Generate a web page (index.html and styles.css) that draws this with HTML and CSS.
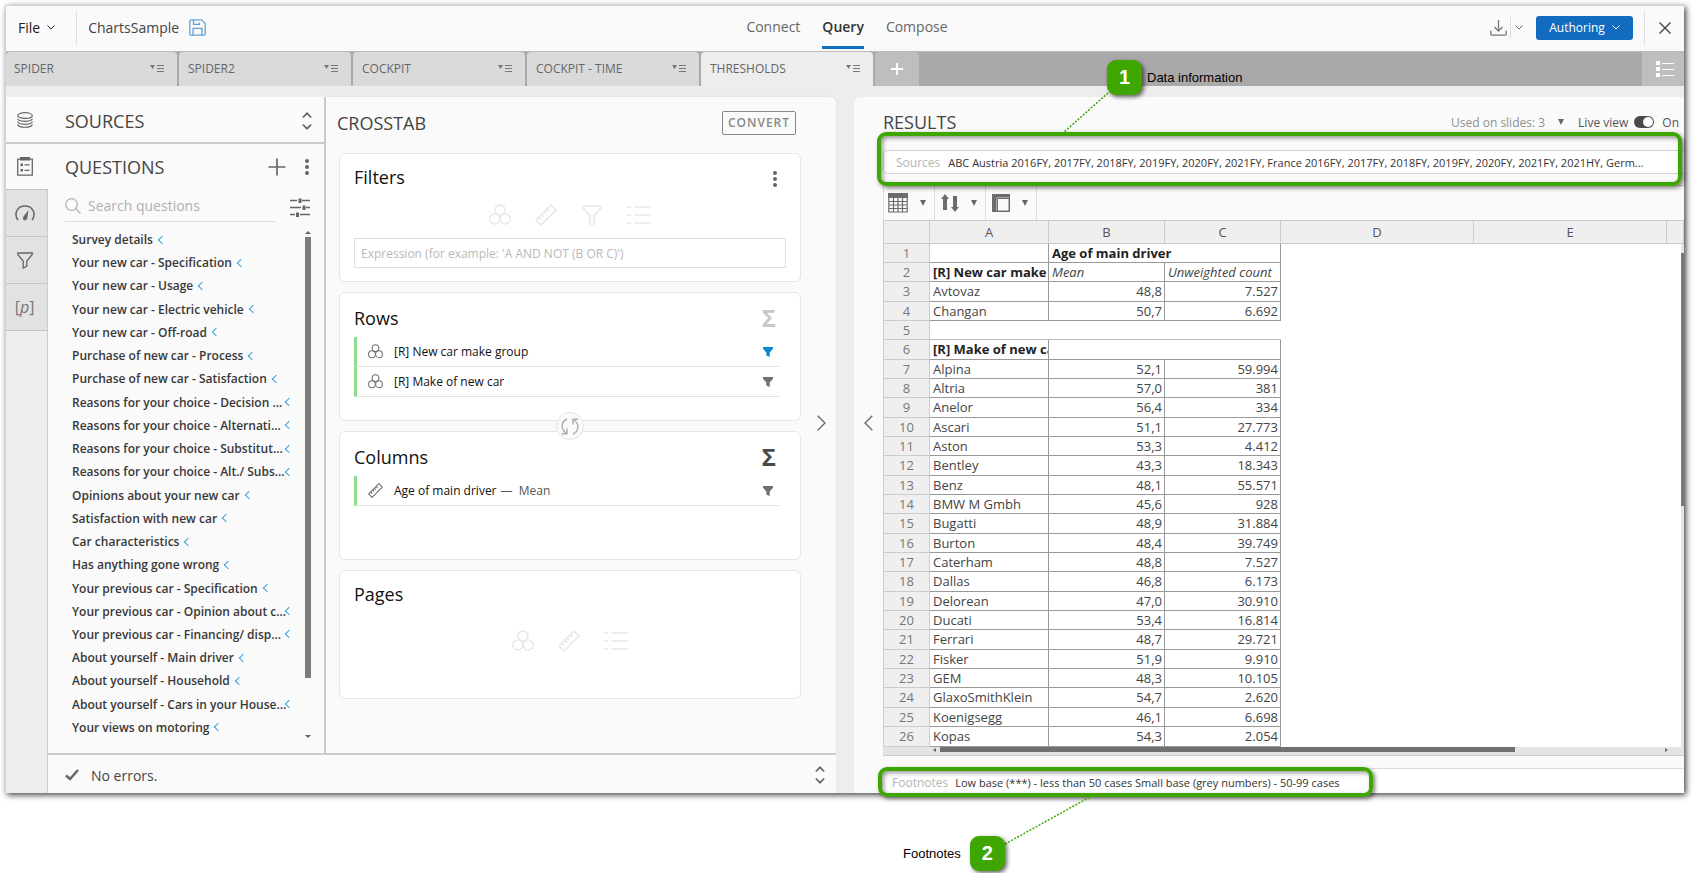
FILE: index.html
```html
<!DOCTYPE html>
<html lang="en">
<head>
<meta charset="utf-8">
<title>ChartsSample - Query</title>
<link rel="stylesheet" href="styles.css">
</head>
<body>
<svg class="defs" aria-hidden="true">
  <symbol id="rings" viewBox="0 0 22 22"><g fill="none" stroke="currentColor" stroke-width="1.5"><circle cx="11" cy="6" r="5"/><circle cx="5.8" cy="15" r="5"/><circle cx="16.2" cy="15" r="5"/></g></symbol>
  <symbol id="ruler" viewBox="0 0 22 22"><g fill="none" stroke="currentColor" stroke-width="1.6" stroke-linejoin="round"><path d="M1 16 16 1l5 5L6 21z"/><path d="M3.800 13.200l2.200 2.200M6.500 10.500l2.200 2.200M9.200 7.800l2.200 2.200M11.900 5.100l2.200 2.200"/></g></symbol>
  <symbol id="funnel" viewBox="0 0 22 22"><path fill="none" stroke="currentColor" stroke-width="1.5" stroke-linejoin="round" d="M2.500 2h17v2.500l-6.500 7V20H9v-8.500l-6.500-7z"/></symbol>
  <symbol id="list" viewBox="0 0 24 22"><path fill="none" stroke="currentColor" stroke-width="1.600" d="M0 3h4M7.500 3H24M0 11h4M7.500 11H24M0 19h4M7.500 19H24"/></symbol>
  <symbol id="fill-funnel" viewBox="0 0 10 10"><path fill="currentColor" d="M0 0h10v1.800L6.700 5.500V10L3.300 8.500v-3L0 1.800z"/></symbol>
  <symbol id="tabmenu" viewBox="0 0 14 9"><path fill="currentColor" d="M0 1h5L2.500 5z"/><path stroke="currentColor" d="M7 1.500h7M7 4.500h7M7 7.500h7"/></symbol>
  <symbol id="updown" viewBox="0 0 10 18"><path fill="none" stroke="currentColor" stroke-width="1.700" d="M.8 5.500 5 1.300l4.200 4.200M.8 12.500 5 16.700l4.200-4.200"/></symbol>
  <symbol id="down" viewBox="0 0 8 5"><path fill="none" stroke="currentColor" d="M.5.5 4 4 7.500.5"/></symbol>
  <symbol id="kebab" viewBox="0 0 4 16"><g fill="currentColor"><circle cx="2" cy="2" r="2"/><circle cx="2" cy="8" r="2"/><circle cx="2" cy="14" r="2"/></g></symbol>
  <symbol id="tri" viewBox="0 0 6 6"><path fill="currentColor" d="M0 0h6L3 6z"/></symbol>
</svg>
<div class="stage">
<div class="window">
  <header class="topbar">
    <div class="top-left">
      <button class="file">File <svg class="i-down"><use href="#down"/></svg></button>
      <span class="doc">ChartsSample</span>
      <button class="icon-btn save" aria-label="Save"><svg width="17" height="17" viewBox="0 0 17 17" fill="none" stroke="currentColor" stroke-width="1.300"><path d="M.8 2.300Q.8.800 2.300.800h10.200l3.700 3.500v10.400q0 1.500-1.500 1.500H2.300q-1.500 0-1.500-1.500z"/><path d="M4.500 1v4.300h6V3.500M4 16V9.300h9V16"/></svg></button>
    </div>
    <nav class="modes">
      <a href="#">Connect</a><a href="#" class="active">Query</a><a href="#">Compose</a>
    </nav>
    <div class="top-right">
      <button class="icon-btn download" aria-label="Download"><svg width="17" height="16" viewBox="0 0 17 16" fill="none" stroke="currentColor" stroke-width="1.300"><path d="M8.500 0v11M4.500 7l4 4 4-4M.8 10.500V14q0 1.200 1.200 1.200h13q1.200 0 1.200-1.200v-3.500"/></svg></button>
      <button class="icon-btn more" aria-label="Download options"><svg class="i-down"><use href="#down"/></svg></button>
      <button class="authoring">Authoring <svg class="i-down"><use href="#down"/></svg></button>
      <button class="icon-btn close" aria-label="Close"><svg width="12" height="12" viewBox="0 0 12 12" stroke="currentColor" stroke-width="1.400"><path d="M.5.5l11 11M11.500.5l-11 11"/></svg></button>
    </div>
  </header>
  <div class="tabs">
    <button class="tab">SPIDER <svg><use href="#tabmenu"/></svg></button>
    <button class="tab">SPIDER2 <svg><use href="#tabmenu"/></svg></button>
    <button class="tab">COCKPIT <svg><use href="#tabmenu"/></svg></button>
    <button class="tab">COCKPIT - TIME <svg><use href="#tabmenu"/></svg></button>
    <button class="tab current">THRESHOLDS <svg><use href="#tabmenu"/></svg></button>
    <button class="tab-add" aria-label="Add tab"><svg width="12" height="12" viewBox="0 0 12 12" stroke="currentColor" stroke-width="1.800"><path d="M6 0v12M0 6h12"/></svg></button>
    <button class="tab-list" aria-label="All tabs"><svg width="18" height="16" viewBox="0 0 18 16"><path fill="currentColor" d="M0 0h4v4H0zM0 6h4v4H0zM0 12h4v4H0zM6 2h12v1H6zM6 8h12v1H6zM6 14h12v1H6z"/></svg></button>
  </div>
  <div class="work">
    <div class="rail">
      <button class="on" aria-label="Sources"><svg width="16" height="16" viewBox="0 0 16 16" fill="none" stroke="currentColor" stroke-width="1.200"><ellipse cx="8" cy="3.500" rx="7.300" ry="2.900"/><path d="M.7 6.500C1.200 10.200 14.800 10.200 15.300 6.500M.7 9.500c.5 3.700 14.100 3.700 14.600 0M.7 12.300c.5 3.900 14.100 3.900 14.600 0"/></svg></button>
      <button class="on" aria-label="Questions"><svg width="16" height="19" viewBox="0 0 16 19"><path fill="none" stroke="currentColor" stroke-width="1.300" d="M.7 2.200h14.600v16H.7z"/><path fill="currentColor" d="M3 0h10v3.500H3zM3.500 6.500H6V9H3.500zM3.500 12H6v2.500H3.500zM7.500 7.300h5v1.200h-5zM7.500 12.800h5V14h-5z"/></svg></button>
      <button aria-label="Measures"><svg width="20" height="16" viewBox="0 0 20 16"><path fill="none" stroke="currentColor" stroke-width="1.500" d="M3 15C-1.500 9 2 1 10 1s11.500 8 7 14"/><path fill="currentColor" d="M13.500 5l-1.300 9q-1.500 2-3.500 1-1.500-1.500-.5-3z"/></svg></button>
      <button aria-label="Filters"><svg width="16" height="17" viewBox="0 0 16 17"><path fill="none" stroke="currentColor" stroke-width="1.300" d="M.8 1h14.400v1.500L9.800 9v5l-3.600 2V9L.8 2.500z"/></svg></button>
      <button aria-label="Parameters" class="param">[<i>p</i>]</button>
    </div>
    <section class="side">
      <div class="side-head sources"><h2>SOURCES</h2><button class="icon-btn" aria-label="Expand"><svg width="10" height="18"><use href="#updown"/></svg></button></div>
      <div class="side-head"><h2>QUESTIONS</h2>
        <button class="icon-btn plus" aria-label="Add"><svg width="18" height="18" viewBox="0 0 18 18" stroke="currentColor" stroke-width="1.700"><path d="M9 .5v17M.5 9h17"/></svg></button>
        <button class="icon-btn" aria-label="Menu"><svg width="4" height="16"><use href="#kebab"/></svg></button></div>
      <div class="search-row">
        <label class="search"><svg width="16" height="16" viewBox="0 0 16 16" fill="none" stroke="currentColor" stroke-width="1.300"><circle cx="6.500" cy="6.500" r="5.800"/><path d="M10.800 10.800l4.700 4.700"/></svg><input type="text" placeholder="Search questions" aria-label="Search questions"></label>
        <button class="icon-btn" aria-label="Search settings"><svg width="20" height="19" viewBox="0 0 20 19" stroke="currentColor" stroke-width="1.300"><path d="M0 2.500h7M12 2.500h8M0 9.500h11M16 9.500h4M0 16.500h5M10 16.500h10"/><path stroke-width="3" d="M10 .5v4.500M14 7.500V12M7.500 14.500V19"/></svg></button>
      </div>
      <div class="list-wrap">
        <ul class="questions">
          <li><span>Survey details</span></li>
          <li><span>Your new car - Specification</span></li>
          <li><span>Your new car - Usage</span></li>
          <li><span>Your new car - Electric vehicle</span></li>
          <li><span>Your new car - Off-road</span></li>
          <li><span>Purchase of new car - Process</span></li>
          <li><span>Purchase of new car - Satisfaction</span></li>
          <li class="long"><span>Reasons for your choice - Decision ...</span></li>
          <li class="long"><span>Reasons for your choice - Alternati...</span></li>
          <li class="long"><span>Reasons for your choice - Substitut...</span></li>
          <li class="long"><span>Reasons for your choice - Alt./ Subs...</span></li>
          <li><span>Opinions about your new car</span></li>
          <li><span>Satisfaction with new car</span></li>
          <li><span>Car characteristics</span></li>
          <li><span>Has anything gone wrong</span></li>
          <li><span>Your previous car - Specification</span></li>
          <li class="long"><span>Your previous car - Opinion about c...</span></li>
          <li class="long"><span>Your previous car - Financing/ disp...</span></li>
          <li><span>About yourself - Main driver</span></li>
          <li><span>About yourself - Household</span></li>
          <li class="long"><span>About yourself - Cars in your House...</span></li>
          <li><span>Your views on motoring</span></li>
        </ul>
        <div class="vbar"><i class="up"></i><b></b><i class="dn"></i></div>
      </div>
    </section>
    <section class="crosstab">
      <div class="cards-col">
        <div class="ct-head"><h2>CROSSTAB</h2><button class="convert">CONVERT</button></div>
        <div class="card compact">
          <div class="card-head"><h3>Filters</h3><button class="icon-btn dots" aria-label="Filter menu"><svg width="4" height="16"><use href="#kebab"/></svg></button></div>
          <div class="drop"><svg><use href="#rings"/></svg><svg><use href="#ruler"/></svg><svg><use href="#funnel"/></svg><svg class="w"><use href="#list"/></svg></div>
          <input class="expr" type="text" placeholder="Expression (for example: 'A AND NOT (B OR C)')" aria-label="Expression">
        </div>
        <div class="card">
          <div class="card-head"><h3>Rows</h3><button class="icon-btn sigma dim">Σ</button></div>
          <div class="item"><svg class="kind"><use href="#rings"/></svg><span>[R] New car make group</span><svg class="flt blue"><use href="#fill-funnel"/></svg></div>
          <div class="item"><svg class="kind"><use href="#rings"/></svg><span>[R] Make of new car</span><svg class="flt"><use href="#fill-funnel"/></svg></div>
          <button class="swap" aria-label="Swap rows and columns"><svg width="18" height="17" viewBox="0 0 18 17" fill="none" stroke="currentColor" stroke-width="1.400"><path d="M6 1C-.5 4-.5 12 6 15.500M6 10.500v5.300H.8M12 16c6.500-3 6.500-11 0-14.500M12 6.500V1.200h5.200"/></svg></button>
        </div>
        <div class="card">
          <div class="card-head"><h3>Columns</h3><button class="icon-btn sigma">Σ</button></div>
          <div class="item"><svg class="kind"><use href="#ruler"/></svg><span>Age of main driver</span><em>—&nbsp; Mean</em><svg class="flt"><use href="#fill-funnel"/></svg></div>
        </div>
        <div class="card compact">
          <div class="card-head"><h3>Pages</h3></div>
          <div class="drop pages"><svg><use href="#rings"/></svg><svg><use href="#ruler"/></svg><svg class="w"><use href="#list"/></svg></div>
        </div>
      </div>
      <button class="icon-btn chev-r" aria-label="Collapse"><svg width="9" height="16" viewBox="0 0 9 16" fill="none" stroke="currentColor" stroke-width="1.300"><path d="M.7.700 8 8 .7 15.300"/></svg></button>
    </section>
    <footer class="status"><svg width="14" height="12" viewBox="0 0 14 12" fill="none" stroke="currentColor" stroke-width="2.600"><path d="M1 6.500l4 3.500L13 1"/></svg><span>No errors.</span><button class="icon-btn" aria-label="Expand"><svg width="10" height="18"><use href="#updown"/></svg></button></footer>
    <section class="results">
      <button class="icon-btn chev-l" aria-label="Collapse"><svg width="9" height="16" viewBox="0 0 9 16" fill="none" stroke="currentColor" stroke-width="1.300"><path d="M8.300.700 1 8l7.300 7.300"/></svg></button>
      <div class="res-main">
        <div class="res-head"><h2>RESULTS</h2>
          <button class="used">Used on slides: 3 <svg class="tri"><use href="#tri"/></svg></button>
          <label class="live"><span>Live view</span><input type="checkbox" checked><span class="on-text">On</span></label>
        </div>
        <div class="src"><span>Sources</span><p>ABC Austria 2016FY, 2017FY, 2018FY, 2019FY, 2020FY, 2021FY, France 2016FY, 2017FY, 2018FY, 2019FY, 2020FY, 2021FY, 2021HY, Germ...</p></div>
        <div class="tools">
          <button aria-label="Table view"><svg width="20" height="20" viewBox="0 0 20 20"><path fill="none" stroke="currentColor" stroke-width="1.200" d="M.8 1h18.400v18H.8zM1 8.500h18M1 12h18M1 15.500h18M5.500 4v15M10 4v15M14.500 4v15"/><path fill="currentColor" d="M0 0h20v5H0z"/></svg><svg class="tri"><use href="#tri"/></svg></button>
          <button aria-label="Sort"><svg width="18" height="18" viewBox="0 0 18 18"><path fill="currentColor" d="M4 0l4 5H6v11H2V5H0zM12 2h4v11h2l-4 5-4-5h2z"/></svg><svg class="tri"><use href="#tri"/></svg></button>
          <button aria-label="Layout"><svg width="18" height="18" viewBox="0 0 18 18"><path fill="currentColor" fill-rule="evenodd" d="M0 0h18v18H0zM6 5v11.500h10.500V5z"/><path stroke="#bbb" stroke-width=".8" d="M4.500 4v13M5 3.500h12"/></svg><svg class="tri"><use href="#tri"/></svg></button>
        </div>
        <div class="sheet">
          <table>
            <colgroup><col class="c0"><col class="c1"><col class="c2"><col class="c2"><col class="c3"><col class="c3"><col></colgroup>
            <thead><tr><th></th><th>A</th><th>B</th><th>C</th><th>D</th><th>E</th><th></th></tr></thead>
            <tbody>
            <tr><th>1</th><td></td><td class="h" colspan="2">Age of main driver</td><td class="void" colspan="3"></td></tr>
            <tr><th>2</th><td class="h">[R] New car make</td><td class="it">Mean</td><td class="it">Unweighted count</td><td class="void" colspan="3"></td></tr>
            <tr><th>3</th><td>Avtovaz</td><td>48,8</td><td>7.527</td><td class="void" colspan="3"></td></tr>
            <tr><th>4</th><td>Changan</td><td>50,7</td><td>6.692</td><td class="void" colspan="3"></td></tr>
            <tr class="gap"><th>5</th><td></td><td></td><td></td><td class="void" colspan="3"></td></tr>
            <tr><th>6</th><td class="h">[R] Make of new car</td><td colspan="2"></td><td class="void" colspan="3"></td></tr>
            <tr><th>7</th><td>Alpina</td><td>52,1</td><td>59.994</td><td class="void" colspan="3"></td></tr>
            <tr><th>8</th><td>Altria</td><td>57,0</td><td>381</td><td class="void" colspan="3"></td></tr>
            <tr><th>9</th><td>Anelor</td><td>56,4</td><td>334</td><td class="void" colspan="3"></td></tr>
            <tr><th>10</th><td>Ascari</td><td>51,1</td><td>27.773</td><td class="void" colspan="3"></td></tr>
            <tr><th>11</th><td>Aston</td><td>53,3</td><td>4.412</td><td class="void" colspan="3"></td></tr>
            <tr><th>12</th><td>Bentley</td><td>43,3</td><td>18.343</td><td class="void" colspan="3"></td></tr>
            <tr><th>13</th><td>Benz</td><td>48,1</td><td>55.571</td><td class="void" colspan="3"></td></tr>
            <tr><th>14</th><td>BMW M Gmbh</td><td>45,6</td><td>928</td><td class="void" colspan="3"></td></tr>
            <tr><th>15</th><td>Bugatti</td><td>48,9</td><td>31.884</td><td class="void" colspan="3"></td></tr>
            <tr><th>16</th><td>Burton</td><td>48,4</td><td>39.749</td><td class="void" colspan="3"></td></tr>
            <tr><th>17</th><td>Caterham</td><td>48,8</td><td>7.527</td><td class="void" colspan="3"></td></tr>
            <tr><th>18</th><td>Dallas</td><td>46,8</td><td>6.173</td><td class="void" colspan="3"></td></tr>
            <tr><th>19</th><td>Delorean</td><td>47,0</td><td>30.910</td><td class="void" colspan="3"></td></tr>
            <tr><th>20</th><td>Ducati</td><td>53,4</td><td>16.814</td><td class="void" colspan="3"></td></tr>
            <tr><th>21</th><td>Ferrari</td><td>48,7</td><td>29.721</td><td class="void" colspan="3"></td></tr>
            <tr><th>22</th><td>Fisker</td><td>51,9</td><td>9.910</td><td class="void" colspan="3"></td></tr>
            <tr><th>23</th><td>GEM</td><td>48,3</td><td>10.105</td><td class="void" colspan="3"></td></tr>
            <tr><th>24</th><td>GlaxoSmithKlein</td><td>54,7</td><td>2.620</td><td class="void" colspan="3"></td></tr>
            <tr><th>25</th><td>Koenigsegg</td><td>46,1</td><td>6.698</td><td class="void" colspan="3"></td></tr>
            <tr><th>26</th><td>Kopas</td><td>54,3</td><td>2.054</td><td class="void" colspan="3"></td></tr>
            </tbody>
          </table>
          <div class="sheet-v"><b></b></div>
        </div>
        <div class="hbar"><i class="lf"></i><b></b><i class="rt"></i></div>
        <div class="foot"><span>Footnotes</span><p>Low base (***) - less than 50 cases Small base (grey numbers) - 50-99 cases</p></div>
      </div>
      <div class="frame frame-src"></div>
      <div class="frame frame-foot"></div>
      <svg class="lead lead-1" width="46" height="42" viewBox="0 0 46 42"><path d="M45 1 1 40"/></svg>
      <svg class="lead lead-2" width="88" height="50" viewBox="0 0 88 50"><path d="M1 48 86 1"/></svg>
      <div class="callout callout-1"><b>1</b><span>Data information</span></div>
      <div class="callout callout-2"><span>Footnotes</span><b>2</b></div>
    </section>
  </div>
</div>
</div>
</body>
</html>
```
FILE: styles.css
```css
* { box-sizing: border-box; }
body { margin: 0; background: #fff; font: 12px "Open Sans", "Noto Sans", sans-serif; color: #444; }
button, input { font: inherit; color: inherit; border: 0; padding: 0; margin: 0; background: none; }
h2, h3, p, ul { margin: 0; padding: 0; }
h2, h3 { font-size: 18px; line-height: 24px; font-weight: 500; }
h2 { color: #444; }
h3 { color: #111; }
svg { display: block; flex: none; }
.defs { position: absolute; width: 0; height: 0; }
.icon-btn { color: #666; display: flex; align-items: center; justify-content: center; }
.i-down { width: 8px; height: 5px; }
.tri { width: 6px; height: 6px; color: #666; }

.stage { padding: 5px 22px 80px 5px; }
.window { border: 1px solid #d2d2d2; border-width: 1px 0 0 1px; background: #ededed; box-shadow: 2px 2px 6px rgba(0, 0, 0, .75); }

/* top bar */
.topbar { display: grid; grid-template-columns: 1fr auto 1fr; height: 46px; background: #fafafa; border-bottom: 1px solid #bbb; }
.top-left, .top-right { display: flex; align-items: center; padding-bottom: 2px; }
.top-right { justify-content: flex-end; }
.file { display: flex; align-items: center; gap: 7px; height: 34px; padding: 0 21px 0 12px; font-size: 14px; color: #222; border-right: 1px solid #ddd; }
.doc { font-size: 14px; padding-left: 11px; }
.save { color: #62a0d8; margin-left: 10px; }
.modes { display: flex; gap: 22px; font-size: 14px; padding-left: 4px; }
.modes a { color: #666; text-decoration: none; line-height: 42px; border-bottom: 3px solid transparent; height: 43px; }
.modes a.active { color: #333; font-weight: 600; border-color: #1070c0; }
.download { color: #777; padding-right: 3px; }
.more { border-left: 1px solid #ddd; height: 22px; padding: 0 13px 0 4px; }
.authoring { display: flex; align-items: center; justify-content: center; gap: 7px; width: 97px; height: 24px; border-radius: 3px; background: #116bbf; color: #fff; }
.close { border-left: 1px solid #ddd; height: 34px; margin-left: 11px; padding: 0 13px 0 14px; color: #444; }

/* tabs */
.tabs { display: flex; gap: 2px; height: 34px; background: #a9a9a9; }
.tab { display: flex; justify-content: space-between; align-items: center; width: 172px; padding: 0 13px 1px 9px; background: #dadada; border-radius: 4px 4px 0 0; color: #666; }
.tab:first-child { width: 171px; padding-left: 8px; }
.tab svg { width: 14px; height: 9px; color: #777; }
.tab.current { background: #ededed; }
.tab-add { width: 44px; background: #bebebe; color: #fff; display: flex; align-items: center; justify-content: center; border-radius: 4px 4px 0 0; }
.tab-list { width: 42px; padding-left: 3px; background: #bebebe; color: #fff; display: flex; align-items: center; justify-content: center; margin-left: auto; }

/* work area */
.work { display: grid; grid-template-columns: 42px 278px minmax(0, 510fr) 18px minmax(0, 830fr); grid-template-rows: 1fr 40px; padding-top: 11px; background: #ededed; }
.rail { grid-row: 1 / 3; display: flex; flex-direction: column; border-right: 1px solid #ccc; }
.rail button { height: 47px; display: flex; align-items: center; justify-content: center; padding-right: 4px; background: #e2e2e2; border-bottom: 1px solid #c4c4c4; color: #666; }
.rail button.on { background: #fafafa; height: 46px; }
.rail .on:first-child { border-bottom: 2px solid #ccc; height: 47px; }
.rail .on { margin-right: -1px; padding-right: 5px; }
.rail .param { font-size: 16px; color: #777; }

.side { display: flex; flex-direction: column; background: #fafafa; border-right: 2px solid #ccc; }
.side-head { display: flex; align-items: center; height: 46px; padding: 0 12px 0 17px; }
.side-head.sources { height: 47px; padding-top: 2px; border-bottom: 2px solid #ccc; }
.side-head h2 { flex: 1; }
.side-head .plus { margin-right: 16px; }
.side-head .icon-btn:last-child { width: 10px; }
.search-row { display: flex; align-items: center; padding: 0 14px 3px 17px; height: 35px; gap: 14px; }
.search-row .icon-btn { padding-top: 3px; }
.search { flex: 1; display: flex; align-items: center; gap: 7px; height: 31px; border-bottom: 1px solid #ddd; color: #b4b4b4; }
.search input { width: 100%; font-size: 14px; outline: 0; }
::placeholder { color: #b0b0b0; opacity: 1; }
.list-wrap { flex: 1; display: flex; justify-content: space-between; padding: 3px 13px 14px 24px; }
.questions { list-style: none; display: flex; flex-direction: column; justify-content: space-between; color: #383838; font-size: 12px; font-weight: 600; }
.questions li { display: flex; align-items: center; gap: 6px; height: 23px; white-space: nowrap; }
.questions li.long { gap: 2px; }
.questions li.long span { width: 212px; }
.questions li::after { content: ""; width: 5px; height: 5px; flex: none; border: solid #3a9fd8; border-width: 0 0 1px 1px; transform: rotate(45deg); }
.vbar { display: flex; flex-direction: column; flex: none; width: 6px; padding: 3px 0 1px; align-items: center; }
.vbar b { width: 6px; flex: none; height: 87%; background: #7b7b7b; margin-top: 3px; }
.vbar i { border: 3px solid transparent; border-width: 3px; }
.vbar .up { border-bottom-color: #666; border-top: 0; }
.vbar .dn { border-top-color: #666; border-bottom: 0; margin-top: auto; }

.crosstab { display: flex; align-items: flex-start; background: #fafafa; border-radius: 0 6px 0 0; box-shadow: 0 0 4px rgba(0, 0, 0, .06); }
.cards-col { flex: 1; display: flex; flex-direction: column; gap: 10px; padding-left: 13px; }
.ct-head { display: flex; align-items: center; justify-content: space-between; height: 46px; padding: 5px 5px 0 0; }
.ct-head h2 { margin-left: -2px; }
.convert { width: 74px; height: 24px; border: 1px solid #888; border-radius: 2px; color: #888; font-weight: 600; letter-spacing: 1px; }
.card { position: relative; height: 129px; background: #fff; border: 1px solid #e6e6e6; border-radius: 6px; padding: 0 14px; }
.card-head { display: flex; justify-content: space-between; align-items: center; height: 44px; padding-top: 5px; }
.compact .card-head { height: 41px; }
.dots { margin-right: 9px; padding-top: 3px; }
.sigma { font-size: 24px; line-height: 24px; font-weight: 700; color: #4a4a4a; margin-right: 10px; }
.sigma.dim { color: #c8c8c8; }
.drop { display: flex; justify-content: center; gap: 24px; height: 40px; align-items: center; color: #e8e8e8; }
.drop svg { width: 22px; height: 22px; }
.drop svg.w { width: 24px; }
.drop.pages { height: 58px; }
.expr { display: block; width: 100%; height: 30px; margin-top: 3px; border: 1px solid #e0e0e0; padding: 0 6px; }
.expr::placeholder { color: #b8b8b8; }
.item { display: flex; align-items: center; height: 30px; margin-right: 7px; padding: 0 6px 0 11px; border-left: 3px solid #8edc8e; border-bottom: 1px solid #e2e2e2; color: #111; }
.item em { font-style: normal; color: #555; margin-left: 4px; }
.kind { width: 15px; height: 15px; color: #707070; margin-right: 11px; }
.flt { width: 10px; height: 10px; color: #707070; margin-left: auto; }
.flt.blue { color: #0c88d0; }
.swap { position: absolute; z-index: 1; left: 50%; bottom: -20px; margin-left: -14px; width: 28px; height: 28px; border: 1px solid #e4e4e4; border-radius: 50%; background: #fafafa; color: #aaa; display: flex; align-items: center; justify-content: center; }
.chev-r { width: 35px; height: 30px; margin-top: 311px; padding-left: 5px; }

.status { grid-column: 2 / 4; grid-row: 2; display: flex; align-items: center; gap: 12px; padding: 2px 11px 0 17px; background: #fafafa; border-top: 2px solid #ccc; font-size: 14px; }
.status svg { color: #666; }
.status button { margin-left: auto; }

/* results */
.results { grid-column: 5; grid-row: 1 / 3; position: relative; display: flex; background: #fafafa; border-radius: 6px 0 0 0; }
.chev-l { width: 29px; height: 30px; margin-top: 311px; padding-right: 1px; }
.res-main { flex: 1; min-width: 0; display: flex; flex-direction: column; }
.res-head { display: flex; align-items: center; height: 53px; padding: 0 5px 3px 0; }
.res-head h2 { flex: 1; }
.used { display: flex; align-items: center; gap: 13px; color: #909090; margin-right: 14px; }
.live { display: flex; align-items: center; gap: 6px; color: #555; }
.live input { appearance: none; width: 20px; height: 12px; border-radius: 6px; background: #4a4a4a; display: flex; justify-content: flex-end; padding: 1px; }
.live input::before { content: ""; width: 10px; height: 10px; border-radius: 50%; background: #fff; }
.on-text { margin-left: 2px; }
.src { display: flex; align-items: center; gap: 8px; height: 24px; padding: 0 4px 0 12px; background: #fff; border: 1px solid #d4d4d4; border-right: 0; border-radius: 5px 0 0 5px; white-space: nowrap; }
.src span, .foot span { color: #b4b4b4; }
.src p, .foot p { color: #333; font-size: 11px; }
.tools { display: flex; height: 35px; margin-top: 11px; border-top: 1px solid #ccc; border-left: 1px solid #ddd; }
.tools button { display: flex; align-items: center; justify-content: space-between; width: 51px; padding: 0 8px 0 4px; border-right: 1px solid #ddd; color: #6c6c6c; }
.tools button + button { padding-left: 6px; }
.sheet { position: relative; background: #fff; }
table { width: 100%; table-layout: fixed; border-collapse: separate; border-spacing: 0; font-size: 13px; line-height: 17px; color: #444; }
.c0 { width: 47px; }
.c1 { width: 119px; }
.c2 { width: 116px; }
.c3 { width: 193px; }
th { padding: 0; font-weight: 400; background: #efefef; border-right: 1px solid #ccc; border-bottom: 1px solid #ccc; color: #777; }
tbody th:first-child, thead th:first-child { border-left: 1px solid #ccc; }
thead th { height: 24px; border-top: 1px solid #ccc; font-size: 13px; color: #555; }
td { padding: 0 2px; border-right: 1px solid #999; border-bottom: 1px solid #999; white-space: nowrap; overflow: hidden; text-align: right; }
tbody tr { height: 19px; }
tbody tr:nth-child(3n), tbody tr:last-child { height: 20px; }
td:nth-child(2), td.h, td.it { text-align: left; padding: 0 0 0 3px; }
td.h { font-weight: 700; color: #222; }
td.it { font-style: italic; }
td.void { border: 0; }
.gap td { border-right: 0; border-bottom-color: #bbb; }
.sheet-v { position: absolute; right: 0; top: 24px; bottom: 0; width: 3px; background: #e4e4e4; padding-top: 9px; }
.sheet-v b { display: block; height: 253px; background: #777; }
.hbar { display: flex; align-items: center; height: 9px; padding: 0 16px 3px 50px; background: #e4e4e4; border-bottom: 1px solid #ccc; }
.hbar b { width: 575px; height: 5px; margin-left: 4px; background: #707070; }
.hbar i { border: 2px solid transparent; }
.hbar .lf { border-right: 3px solid #666; border-left: 0; }
.hbar .rt { border-left: 3px solid #666; border-right: 0; margin-left: auto; }
.foot { display: flex; align-items: center; gap: 7px; flex: 1; min-height: 25px; margin-top: 12px; padding: 3px 0 0 9px; background: #fff; border-top: 1px solid #ddd; }

/* callouts over the results panel */
.frame { position: absolute; border: 4px solid #3fa600; border-radius: 9px; pointer-events: none; box-shadow: 2px 2px 4px rgba(0, 0, 0, .5), inset 2px 2px 4px rgba(0, 0, 0, .4); }
.frame-src { left: 23px; right: 2px; top: 35px; height: 54px; }
.frame-foot { left: 24px; bottom: -4px; width: 495px; height: 30px; }
.lead { position: absolute; fill: none; stroke: #3fa600; stroke-width: 1.5; stroke-dasharray: 2 1.5; }
.lead-1 { left: 209px; top: -5px; }
.lead-2 { left: 150px; bottom: -53px; }
.callout { position: absolute; display: flex; align-items: center; gap: 5px; font: 13px "Liberation Sans", Arial, sans-serif; color: #000; white-space: nowrap; }
.callout b { width: 35px; height: 35px; border-radius: 9px; background: #3fa600; color: #fff; font-size: 20px; line-height: 35px; text-align: center; box-shadow: 2px 2px 4px rgba(0, 0, 0, .6); }
.callout-1 { left: 253px; top: -37px; }
.callout-2 { left: 49px; bottom: -78px; gap: 9px; }
```
